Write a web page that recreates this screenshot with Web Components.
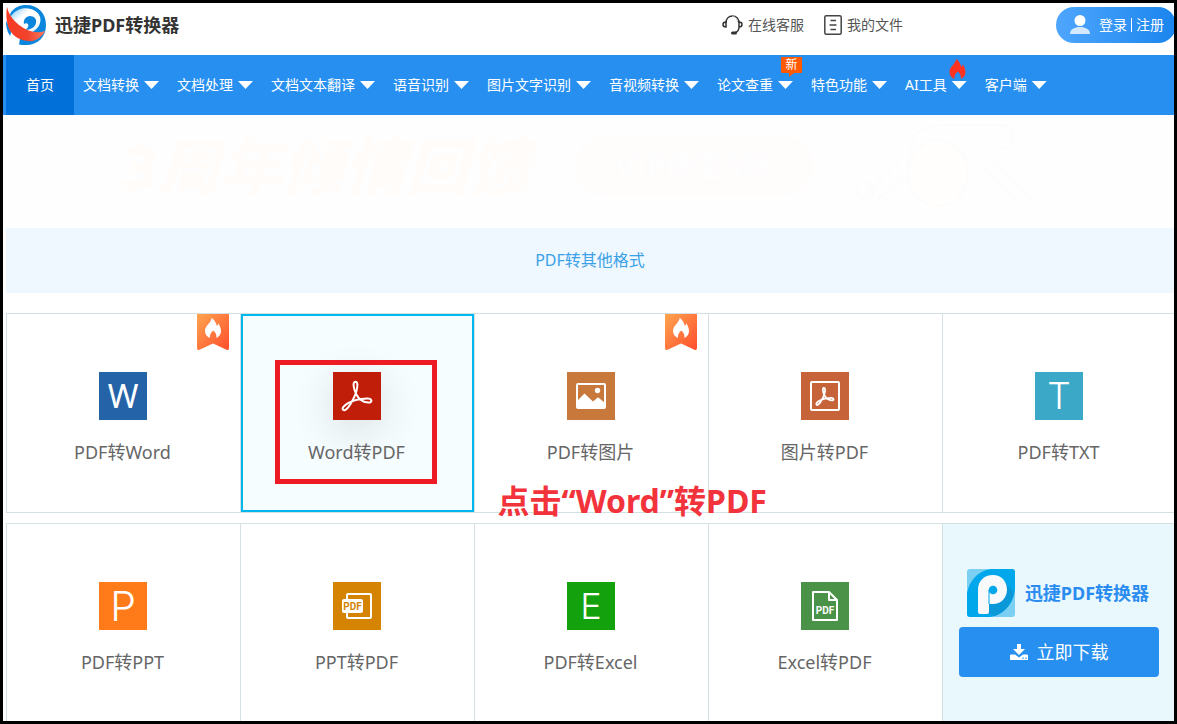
<!DOCTYPE html>
<html lang="zh-CN">
<head>
<meta charset="utf-8">
<meta name="viewport" content="width=device-width, initial-scale=1">
<title>迅捷PDF转换器</title>
<style>
  html, body { margin: 0; }
  body { font-family: "Noto Sans", "Noto Sans CJK SC", sans-serif; font-size: 14px; color: #555; background: #fff; }
</style>
</head>
<body>
<app-frame>
  <site-header></site-header>
  <site-nav>
    <nav-item current>首页</nav-item>
    <nav-item>文档转换</nav-item>
    <nav-item>文档处理</nav-item>
    <nav-item>文档文本翻译</nav-item>
    <nav-item>语音识别</nav-item>
    <nav-item>图片文字识别</nav-item>
    <nav-item>音视频转换</nav-item>
    <nav-item badge="new">论文查重</nav-item>
    <nav-item>特色功能</nav-item>
    <nav-item badge="hot">AI工具</nav-item>
    <nav-item>客户端</nav-item>
  </site-nav>
  <promo-banner></promo-banner>
  <section-title>PDF转其他格式</section-title>
  <tool-grid>
    <tool-card icon="word" hot>PDF转Word</tool-card>
    <tool-card icon="acrobat" selected>Word转PDF</tool-card>
    <tool-card icon="image" hot>PDF转图片</tool-card>
    <tool-card icon="imagepdf">图片转PDF</tool-card>
    <tool-card icon="txt">PDF转TXT</tool-card>
    <tool-card icon="ppt">PDF转PPT</tool-card>
    <tool-card icon="pptpdf">PPT转PDF</tool-card>
    <tool-card icon="excel">PDF转Excel</tool-card>
    <tool-card icon="excelpdf">Excel转PDF</tool-card>
    <download-card></download-card>
    <step-note slot="note">点击“Word”转PDF</step-note>
  </tool-grid>
</app-frame>

<script>
const define = (name, render) => customElements.define(name, class extends HTMLElement {
  constructor() {
    super();
    this.attachShadow({ mode: "open" });
  }
  connectedCallback() {
    this.shadowRoot.innerHTML = render(this);
  }
});

const FLAME = `<path d="M6.500 0C8.500 1.200 10.800 3.500 11.800 7.800c.9-.5 1.300-1.500 1.500-2.600C15 8 16 10.500 16 13c0 3.200-1.800 5.600-4.600 7 .5-3.400-.9-5.600-3.200-7.600C6 14.500 4.500 16.600 4.900 20 1.800 18.600 0 16.200 0 13c0-3.200 1.400-4.700 3.200-6.700C5 4.300 6.400 2.600 6.500 0z"/>`;

const ACROBAT = `<path d="M22.500 9.800c-3.600 0-1.400 8 .6 12.200 2 4 6.500 8.300 12.400 8.600 4.200.2 4-4.400-1.500-4.200-6 .2-14 2-18.500 4.400-5 2.800-6.800 5.500-5.400 7 1.600 1.600 4.600-1.200 7.400-5.800 3-5 5-9 6-13 1.200-4.800 1.500-9.200-1-9.200z"/>`;

const letter = (c, y, size) =>
  `<text x="24" y="${y}" text-anchor="middle" font-family="Inter, sans-serif" font-weight="300" font-size="${size}" fill="#fff">${c}</text>`;

const ICONS = {
  word: ["#2563a9", `<text x="24" y="36" text-anchor="middle" font-family="Noto Sans, sans-serif" font-weight="400" font-size="33" fill="#fff">W</text>`],
  acrobat: ["#c01e08", `<g fill="none" stroke="#fff" stroke-width="2">${ACROBAT}</g>`],
  image: ["#c7783a", `<rect x="10" y="12" width="28" height="24" rx="1" fill="none" stroke="#fff" stroke-width="2"/><circle cx="30.500" cy="18.500" r="2.700" fill="#fff"/><path d="M10 29l7.500-7.500 8.500 8 5-4.200 7 5.700v5H10z" fill="#fff"/>`],
  imagepdf: ["#c76339", `<rect x="10" y="10" width="28" height="28" rx="1" fill="none" stroke="#fff" stroke-width="2"/><g transform="translate(9.500 10) scale(.6)" fill="none" stroke="#fff" stroke-width="3">${ACROBAT}</g>`],
  txt: ["#3aa8c6", letter("T", 37, 37)],
  ppt: ["#ff7a18", letter("P", 39, 41)],
  pptpdf: ["#d48402", `<rect x="14" y="12" width="24" height="24" rx="1" fill="none" stroke="#fff" stroke-width="2"/><rect x="9" y="17" width="21" height="14" rx="2" fill="#fff"/><text x="19.500" y="28" text-anchor="middle" font-family="Roboto, sans-serif" font-weight="700" font-size="10" fill="#d48402">PDF</text>`],
  excel: ["#13a10e", letter("E", 37, 36)],
  excelpdf: ["#4a9247", `<path d="M12 10h16l8 8v20H12zM28 10v8h8" fill="none" stroke="#fff" stroke-width="2" stroke-linejoin="round"/><text x="24" y="32" text-anchor="middle" font-family="Roboto, sans-serif" font-weight="700" font-size="10" fill="#fff">PDF</text>`]
};

define("app-frame", () => `
  <style>
    :host { display: block; box-sizing: border-box; height: 100vh; overflow: hidden; border: 3px solid #000; background: #fff; }
  </style>
  <slot></slot>`);

define("site-header", () => `
  <style>
    :host { display: block; }
    header { display: flex; align-items: center; height: 52px; padding-left: 3px; }
    a { display: flex; align-items: center; color: inherit; text-decoration: none; white-space: nowrap; line-height: 20px; }
    svg { display: block; flex: none; }
    .brand { gap: 8px; font-size: 18px; font-weight: 700; color: #333; margin: 0 auto 8px 0; }
    .tools { display: flex; gap: 20px; margin-bottom: 8px; }
    .tools a { gap: 5px; }
    button { display: flex; align-items: center; gap: 8px; width: 120px; height: 36px; margin: 0 -2px 8px 153px; padding: 0 0 0 13px; border: 0; border-radius: 18px; background: linear-gradient(90deg, #4fa6fd, #1a85ee); color: #fff; font: inherit; line-height: 20px; white-space: nowrap; }
    button i { display: inline-block; width: 1px; height: 14px; margin: 0 4px; background: #fff; vertical-align: -2px; }
  </style>
  <header>
    <a class="brand" href="#">
      <svg width="41" height="42" viewBox="0 0 41 42" aria-hidden="true">
        <defs>
          <linearGradient id="r" x2="1"><stop offset="0" stop-color="#fb3a22"/><stop offset=".55" stop-color="#f0432c"/><stop offset="1" stop-color="#fb7a62"/></linearGradient>
          <linearGradient id="w" x2="1" y1="0" y2="1"><stop offset="0" stop-color="#7fc6f3"/><stop offset=".35" stop-color="#fff"/><stop offset=".75" stop-color="#fff"/><stop offset="1" stop-color="#9ad5f8"/></linearGradient>
        </defs>
        <path d="M4 10C8 3 14 1 20 1c12 0 20 8 20 20s-8 20-20 20c-3 0-5 0-7-.6l1.500-9L7 22z" fill="#0a86dd"/>
        <path d="M0 17c0 6 1 10 4 15l2-6z" fill="#0a86dd"/>
        <path d="M5 12C10 5 18 3 25 5c7 2 11 8 9 14-2 7-8 10-15 11C11 27 6 20 5 12z" fill="url(#w)"/>
        <path d="M18 20c-1-4 2-8 6-8 4 0 7 3 6 7-1 4-5 7-11 7 3-2 4-4 3-6-1-1-3-1-4 0z" fill="#0a86dd"/>
        <path d="M1 3c2 8 6 13 12 18 8 6 17 9 26 6-3 6-9 11-17 10C12 36 5 31 2 22 0 15 0 9 1 3z" fill="url(#r)"/>
      </svg>
      <span>迅捷PDF转换器</span>
    </a>
    <div class="tools">
      <a href="#">
        <svg width="21" height="20" viewBox="0 0 21 20" fill="none" stroke="#333" stroke-width="1.500" aria-hidden="true">
          <path d="M4 8C4 3.500 7 1 10.500 1S17 3.500 17 8"/><path d="M10 1.200c3.500 0 5.500 3 5.500 6" stroke="#bbb" stroke-width="1"/>
          <path d="M4 7C2 7 1 8 1 9.500S2 12 4 12zM17 7c2 0 3 1 3 2.500S19 12 17 12zM17 12c0 3-2 5-4 5.500"/><path d="M10.500 18h3" stroke-width="3" stroke-linecap="round"/>
        </svg><span>在线客服</span></a>
      <a href="#">
        <svg width="18" height="20" viewBox="0 0 18 20" fill="none" stroke="#444" stroke-width="1.500" aria-hidden="true"><rect x=".8" y=".8" width="16.400" height="18.400" rx="1.500"/><path d="M6.500 5.500H12M5.500 10h7M6.500 14.500H12"/></svg>
        <span>我的文件</span></a>
    </div>
    <button type="button">
      <svg width="22" height="20" viewBox="0 0 22 20" aria-hidden="true"><circle cx="11" cy="5.500" r="5.500" fill="#fff"/><path d="M1 19c0-5 5-7 10-7s10 2 10 7z" fill="#d4e9fe"/></svg>
      <span>登录<i></i>注册</span>
    </button>
  </header>`);

define("site-nav", () => `
  <style>
    :host { display: block; }
    nav { display: flex; height: 60px; padding-left: 3px; background: #278ff0; }
  </style>
  <nav><slot></slot></nav>`);

define("nav-item", el => `
  <style>
    :host { display: block; position: relative; flex: none; }
    a { display: flex; align-items: center; gap: 5px; height: 60px; padding: 0 9px; box-sizing: border-box; color: #fff; text-decoration: none; line-height: 20px; white-space: nowrap; }
    .current { justify-content: center; width: 68px; background: #0170d8; }
    .arrow { width: 15px; height: 8px; background: #fff; clip-path: polygon(0 0, 100% 0, 50% 100%); }
    .new { position: absolute; top: 2px; right: 0; width: 21px; border-radius: 1px; background: #ff5a00; color: #fff; font-size: 12px; line-height: 16px; text-align: center; }
    .new::after { content: ""; position: absolute; top: 16px; left: 8px; border-top: 4px solid #ff5a00; border-right: 5px solid transparent; }
    .hot { position: absolute; top: 4px; right: 10px; fill: #ff3322; }
  </style>
  <a href="#" class="${el.hasAttribute("current") ? "current" : ""}"><slot></slot>${el.hasAttribute("current") ? "" : `<span class="arrow"></span>`}</a>
  ${el.getAttribute("badge") === "new" ? `<span class="new">新</span>` : ""}
  ${el.getAttribute("badge") === "hot" ? `<svg class="hot" width="17" height="20" viewBox="0 0 16 20" aria-hidden="true">${FLAME}</svg>` : ""}`);

define("promo-banner", () => `
  <style>
    :host { display: flex; align-items: center; height: 113px; padding: 0 0 12px 119px; box-sizing: border-box; background: #fefefe; white-space: nowrap; }
    strong { font-size: 62px; line-height: 60px; font-weight: 900; font-style: italic; color: #fffcfa; }
    span { margin-left: 44px; width: 240px; border-radius: 30px; background: #fffcfc; color: #fefefe; font-size: 30px; line-height: 60px; font-weight: 700; text-align: center; }
    svg { margin-left: 36px; }
  </style>
  <strong>3周年倾情回馈</strong>
  <span>VIP低至3折</span>
  <svg width="190" height="90" viewBox="0 0 190 90" fill="none" stroke="#fcfcfc" stroke-width="2" aria-hidden="true">
    <ellipse cx="88" cy="52" rx="30" ry="33" fill="#fffefc"/><path d="M60 30C60 8 80 2 110 4h45c12 6 10 22-4 24M10 78l40-38M22 84l30-28M140 35l44 46M134 46l38 38"/><circle cx="15" cy="70" r="9"/>
  </svg>`);

define("section-title", () => `
  <style>
    :host { display: block; margin-left: 3px; background: #eff7ff; }
    h2 { margin: 0; font-size: 16px; font-weight: 400; line-height: 65px; text-align: center; color: #3ba1e6; }
  </style>
  <h2><slot></slot></h2>`);

define("tool-grid", () => `
  <style>
    :host { display: grid; position: relative; grid-template-columns: repeat(5, 1fr); grid-auto-rows: 200px; row-gap: 10px; margin: 20px -2px 0 3px; }
  </style>
  <slot></slot><slot name="note"></slot>`);

define("tool-card", el => {
  const [color, art] = ICONS[el.getAttribute("icon")];
  const selected = el.hasAttribute("selected");
  return `
  <style>
    :host { display: block; position: relative; box-sizing: border-box; border: solid #d5e0e4; border-width: 1px 0 1px 1px; }
    a { display: flex; flex-direction: column; align-items: center; gap: 20px; height: 100%; padding: 58px 2px 0 0; box-sizing: border-box; color: #666; text-decoration: none; font-size: 18px; line-height: 24px; white-space: nowrap; }
    .icon { display: block; width: 48px; height: 48px; }
    .selected { background: #f5fdff; padding-top: 56px; border: 2px solid #00b7ee; }
    .selected .icon { box-shadow: 0 10px 40px rgba(60, 40, 50, .14); }
    .ribbon { position: absolute; top: 0; right: 11px; }
    .frame { position: absolute; inset: 46px 37px 28px 34px; border: 5px solid #ed1c24; pointer-events: none; }
  </style>
  <a href="#" class="${selected ? "selected" : ""}">
    <svg class="icon" viewBox="0 0 48 48" aria-hidden="true"><rect width="48" height="48" fill="${color}"/>${art}</svg>
    <span><slot></slot></span>
  </a>
  ${selected ? `<div class="frame"></div>` : ""}
  ${el.hasAttribute("hot") ? `<svg class="ribbon" width="32" height="36" viewBox="0 0 32 36" aria-hidden="true">
    <defs><linearGradient id="g" x2="1" y2="1"><stop offset="0" stop-color="#ffa550"/><stop offset="1" stop-color="#ff4d2c"/></linearGradient></defs>
    <path d="M0 0h32v34q0 3-3 1.500L16 29.500 3 35.500Q0 37 0 34z" fill="url(#g)"/><g transform="translate(8 4)" fill="#fff">${FLAME}</g></svg>` : ""}`;
});

define("download-card", () => `
  <style>
    :host { display: flex; flex-direction: column; align-items: center; gap: 10px; box-sizing: border-box; padding-top: 45px; border: 1px solid #d5e0e4; background: #e8f8fd; }
    .brand { display: flex; align-items: center; gap: 10px; padding-right: 2px; color: #2a8cf0; font-size: 18px; font-weight: 700; line-height: 24px; white-space: nowrap; }
    svg { display: block; }
    a { display: flex; align-items: center; justify-content: center; gap: 8px; width: 200px; height: 50px; border-radius: 4px; background: #278ff0; color: #fff; font-size: 18px; line-height: 24px; text-decoration: none; }
  </style>
  <div class="brand">
    <svg width="48" height="48" viewBox="0 0 48 48" aria-hidden="true">
      <defs><clipPath id="c"><rect width="48" height="48" rx="3"/></clipPath></defs>
      <g clip-path="url(#c)"><rect width="48" height="48" fill="#7acff3"/><path d="M0 48V24C3 10 13 0 27 0h21v20c-1 14-11 26-25 28z" fill="#00a7ea"/>
      <path d="M38 14l9 9c-2 12-9 20-19 24l-6-2V34z" fill="#0a98d8"/>
      <path d="M11 43V21C11 12 17 6 26 6c8 0 14 6 14 14.500S34 35 26 35h-4v8q0 2-2 2h-7q-2 0-2-2z" fill="#f7f9fa"/>
      <circle cx="26" cy="21" r="4.300" fill="#00a7ea"/><path d="M22 35V21" stroke="#00a7ea" stroke-width="1"/></g>
    </svg>
    <span>迅捷PDF转换器</span>
  </div>
  <a href="#">
    <svg width="19" height="17" viewBox="0 0 19 17" fill="#fff" aria-hidden="true"><path d="M7 0h4v5h4l-6 6-6-6h4z"/><path d="M1 10.500h4l4 3 4-3h4q1 0 1 1V16H0v-4.500q0-1 1-1z"/><path d="M12 13.500h2v1.500h-2zM15 13.500h2v1.500h-2z" fill="#7bb9f5"/></svg>
    <span>立即下载</span>
  </a>`);

define("step-note", () => `
  <style>
    :host { display: block; position: absolute; left: 42%; top: 168px; font-size: 32px; line-height: 40px; font-weight: 700; color: #f2333b; white-space: nowrap; }
  </style>
  <slot></slot>`);
</script>
</body>
</html>
